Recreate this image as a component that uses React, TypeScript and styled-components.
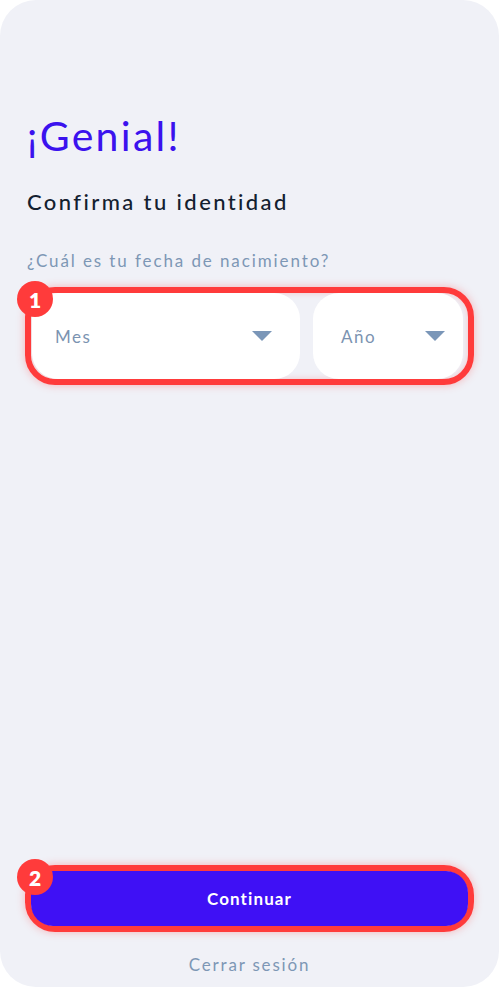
import styled, { createGlobalStyle } from 'styled-components';

const GlobalStyle = createGlobalStyle`
  html, body {
    margin: 0;
    padding: 0;
    background: #ffffff;
  }
  * {
    box-sizing: border-box;
  }
`;

const StyledScreen = styled.div`
  width: 499px;
  height: 987px;
  background-color: #f0f1f7;
  border-radius: 36px;
  display: flex;
  flex-direction: column;
  padding: 108px 27px 10px 27px;
  font-family: 'Lato', 'Noto Sans', sans-serif;
  overflow: hidden;
`;

const StyledTitle = styled.h1`
  margin: 0;
  font-weight: 400;
  font-size: 41px;
  line-height: 56px;
  color: #3b12ee;
  letter-spacing: 2.3px;
`;

const StyledSubtitle = styled.h2`
  margin: 23px 0 0 0;
  font-weight: 500;
  font-size: 22px;
  line-height: 30px;
  color: #13202f;
  letter-spacing: 2.4px;
`;

const StyledQuestion = styled.p`
  margin: 32px 0 0 0;
  font-size: 17px;
  line-height: 24px;
  color: #7d97b5;
  letter-spacing: 1.9px;
`;

interface HighlightProps {
  $top: number;
}

const StyledHighlight = styled.div<HighlightProps>`
  position: relative;
  margin: ${(props) => props.$top}px -2px 0 -2px;
  border: 6px solid #ff3b3b;
  border-radius: 30px;
  box-shadow: 0 0 8px rgba(255, 59, 59, 0.35), inset 0 0 6px rgba(255, 59, 59, 0.25);
`;

const StyledBadge = styled.span`
  position: absolute;
  left: -14px;
  top: -12px;
  width: 36px;
  height: 36px;
  border-radius: 50%;
  background-color: #ff3b3b;
  color: #ffffff;
  font-weight: 800;
  font-size: 21px;
  display: flex;
  align-items: center;
  justify-content: center;
  z-index: 2;
`;

const StyledSelectRow = styled.div`
  display: flex;
  gap: 13px;
  padding: 0 2px 0 1px;
`;

interface SelectProps {
  $width: number;
  $left: number;
  $right: number;
}

const StyledSelect = styled.div<SelectProps>`
  width: ${(props) => props.$width}px;
  height: 86px;
  background-color: #ffffff;
  border-radius: 26px;
  display: flex;
  align-items: center;
  justify-content: space-between;
  padding: 0 ${(props) => props.$right}px 0 ${(props) => props.$left}px;
  font-size: 17px;
  color: #7b93b1;
  letter-spacing: 1.5px;
`;

const StyledCaret = styled.span`
  width: 0;
  height: 0;
  border-left: 10px solid transparent;
  border-right: 10px solid transparent;
  border-top: 10px solid #7a96b8;
`;

const StyledSpacer = styled.div`
  flex: 1;
`;

const StyledButton = styled.button`
  width: 100%;
  height: 55px;
  border: none;
  border-radius: 22px;
  background-color: #3f10f5;
  color: #ffffff;
  font-family: inherit;
  font-weight: 700;
  font-size: 17px;
  letter-spacing: 1.1px;
  display: block;
  cursor: pointer;
`;

const StyledLink = styled.a`
  margin-top: 21px;
  text-align: center;
  font-size: 17px;
  line-height: 24px;
  color: #7d97b5;
  letter-spacing: 1.8px;
`;

const App = () => {
  return (
    <>
      <GlobalStyle />
      <StyledScreen>
        <StyledTitle>¡Genial!</StyledTitle>
        <StyledSubtitle>Confirma tu identidad</StyledSubtitle>
        <StyledQuestion>¿Cuál es tu fecha de nacimiento?</StyledQuestion>
        <StyledHighlight $top={14}>
          <StyledBadge>1</StyledBadge>
          <StyledSelectRow>
            <StyledSelect $width={268} $left={23} $right={28}>
              Mes
              <StyledCaret />
            </StyledSelect>
            <StyledSelect $width={150} $left={28} $right={18}>
              Año
              <StyledCaret />
            </StyledSelect>
          </StyledSelectRow>
        </StyledHighlight>
        <StyledSpacer />
        <StyledHighlight $top={0}>
          <StyledBadge>2</StyledBadge>
          <StyledButton>Continuar</StyledButton>
        </StyledHighlight>
        <StyledLink>Cerrar sesión</StyledLink>
      </StyledScreen>
    </>
  );
};

export default App;
